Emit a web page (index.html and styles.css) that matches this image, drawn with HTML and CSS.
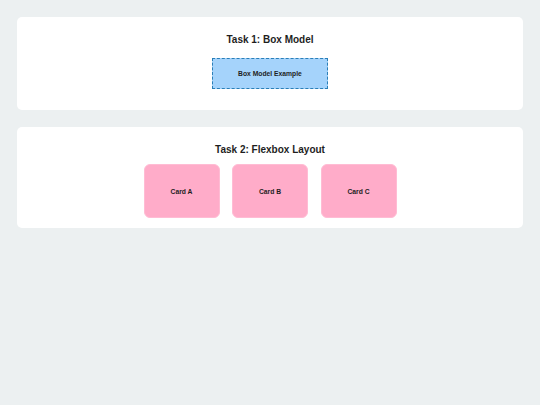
FILE: index.html
```html
<!DOCTYPE html>
<html>
<head>
<meta charset="utf-8">
<link rel="stylesheet" href="styles.css">
</head>
<body>
<main class="page">
  <section class="panel panel-box">
    <h2 class="panel-title">Task 1: Box Model</h2>
    <div class="box-example">Box Model Example</div>
  </section>
  <section class="panel panel-flex">
    <h2 class="panel-title">Task 2: Flexbox Layout</h2>
    <div class="card-row">
      <div class="card">Card A</div>
      <div class="card">Card B</div>
      <div class="card">Card C</div>
    </div>
  </section>
</main>
</body>
</html>
```
FILE: styles.css
```css
html, body {
  margin: 0;
  padding: 0;
  background: #ecf0f1;
  font-family: "Liberation Sans", Arial, sans-serif;
  color: #1e1e1e;
}
.page {
  padding: 17px;
  display: flex;
  flex-direction: column;
  gap: 17px;
}
.panel {
  background: #ffffff;
  border-radius: 5px;
  padding: 17px 17px 0;
  display: flex;
  flex-direction: column;
  align-items: center;
}
.panel-box {
  height: 76px;
}
.panel-flex {
  height: 84px;
}
.panel-title {
  margin: 0;
  font-size: 10px;
  line-height: 11.5px;
  font-weight: bold;
  text-align: center;
}
.box-example {
  margin-top: 12.5px;
  width: 114px;
  height: 29px;
  border: 1px dashed #2a7fb8;
  background: #a5d3fb;
  display: flex;
  align-items: center;
  justify-content: center;
  font-size: 6.75px;
  font-weight: bold;
}
.card-row {
  margin-top: 8.5px;
  display: flex;
  gap: 12.5px;
  justify-content: center;
}
.card {
  width: 76px;
  height: 54px;
  box-sizing: border-box;
  border: 1px solid #ffbcd4;
  border-radius: 6px;
  background: #ffacc9;
  display: flex;
  align-items: center;
  justify-content: center;
  font-size: 6.75px;
  font-weight: bold;
}
```
